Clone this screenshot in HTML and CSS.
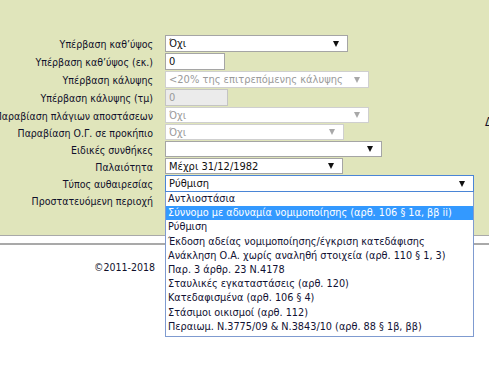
FILE: index.html
```html
<!DOCTYPE html>
<html lang="el">
<head>
<meta charset="utf-8">
<link rel="stylesheet" href="styles.css">
</head>
<body>
<div class="panel">
  <div class="form">
    <div class="row r18"><div class="lbl"><span>Υπέρβαση καθ’ύψος</span></div><div class="ctl"><div class="sel w183"><span class="val">Όχι</span><i class="arr"></i></div></div></div>
    <div class="row r18"><div class="lbl"><span>Υπέρβαση καθ’ύψος (εκ.)</span></div><div class="ctl"><div class="inp w60">0</div></div></div>
    <div class="row r18"><div class="lbl"><span>Υπέρβαση κάλυψης</span></div><div class="ctl"><div class="sel w204 dis"><span class="val">&lt;20% της επιτρεπόμενης κάλυψης</span><i class="arr"></i></div></div></div>
    <div class="row r18"><div class="lbl"><span>Υπέρβαση κάλυψης (τμ)</span></div><div class="ctl"><div class="inp w63 dis">0</div></div></div>
    <div class="row r17"><div class="lbl"><span>Παραβίαση πλάγιων αποστάσεων</span></div><div class="ctl"><div class="sel w204 dis"><span class="val">Όχι</span><i class="arr"></i></div></div></div>
    <div class="row r17"><div class="lbl"><span>Παραβίαση Ο.Γ. σε προκήπιο</span></div><div class="ctl"><div class="sel w179 dis"><span class="val">Όχι</span><i class="arr"></i></div></div></div>
    <div class="row r17"><div class="lbl"><span>Ειδικές συνθήκες</span></div><div class="ctl"><div class="sel w217"><span class="val"></span><i class="arr"></i></div></div></div>
    <div class="row r17"><div class="lbl"><span>Παλαιότητα</span></div><div class="ctl"><div class="sel w178"><span class="val">Μέχρι 31/12/1982</span><i class="arr"></i></div></div></div>
    <div class="row r17"><div class="lbl"><span>Τύπος αυθαιρεσίας</span></div><div class="ctl drop-anchor"><div class="sel w309 focus"><span class="val">Ρύθμιση</span><i class="arr"></i></div>
      <ul class="list">
        <li>Αντλιοστάσια</li>
        <li class="hl">Σύννομο με αδυναμία νομιμοποίησης (αρθ. 106 § 1α, ββ ii)</li>
        <li>Ρύθμιση</li>
        <li>Έκδοση αδείας νομιμοποίησης/έγκριση κατεδάφισης</li>
        <li>Ανάκληση Ο.Α. χωρίς αναληθή στοιχεία (αρθ. 110 § 1, 3)</li>
        <li>Παρ. 3 άρθρ. 23 Ν.4178</li>
        <li>Σταυλικές εγκαταστάσεις (αρθ. 120)</li>
        <li>Κατεδαφισμένα (αρθ. 106 § 4)</li>
        <li>Στάσιμοι οικισμοί (αρθ. 112)</li>
        <li>Περαιωμ. Ν.3775/09 &amp; Ν.3843/10 (αρθ. 88 § 1β, ββ)</li>
      </ul>
    </div></div>
    <div class="row r17"><div class="lbl"><span>Προστατευόμενη περιοχή</span></div><div class="ctl"><div class="sel w217"><span class="val"></span><i class="arr"></i></div></div></div>
  </div>
  <div class="side">Δ</div>
</div>
<div class="footer">
  <div class="copy">©2011-2018</div>
</div>
</body>
</html>
```
FILE: styles.css
```css
html, body {
  margin: 0;
  padding: 0;
  background: #ffffff;
}
body {
  width: 489px;
  height: 365px;
  overflow: hidden;
  font-family: "DejaVu Sans", sans-serif;
  font-stretch: condensed;
  font-size: 10.5px;
  color: #10102a;
}
.panel {
  display: flex;
  background: #e0e5bb;
  padding: 35px 0 26px 0;
  border-bottom: 1px solid #a9a9a9;
  height: 174px;
}
.form {
  width: 485px;
  flex-shrink: 0;
  display: flex;
  flex-direction: column;
}
.side {
  padding-top: 80px;
  white-space: nowrap;
  font-size: 12px;
}
.row {
  display: grid;
  grid-template-columns: 153px 1fr;
  column-gap: 12px;
  align-items: start;
}
.r18 { height: 18px; }
.r17 { height: 17px; }
.lbl {
  display: flex;
  justify-content: flex-end;
  align-items: center;
  height: 17px;
  white-space: nowrap;
}
.ctl {
  display: flex;
}
.drop-anchor {
  position: relative;
}
.sel, .inp {
  box-sizing: border-box;
  height: 17px;
  border: 1px solid #a5a5a5;
  background: #ffffff;
  display: flex;
  align-items: center;
  padding: 0 8px 0 3px;
  white-space: nowrap;
  overflow: hidden;
  color: #111111;
  font-size: 11px;
}
.r17 .sel { height: 16px; }
.inp { padding-right: 2px; }
.val {
  flex: 1;
  overflow: hidden;
}
.arr {
  width: 0;
  height: 0;
  border-left: 3.5px solid transparent;
  border-right: 3.5px solid transparent;
  border-top: 6px solid #111111;
  margin-left: 4px;
}
.dis {
  border-color: #cfcfcf;
  color: #9a9a9a;
}
.dis .arr { border-top-color: #a8a8a8; }
.inp.dis {
  background: #ebebeb;
  border-color: #c4c4c4;
}
.focus {
  border-color: #4a85d6;
  height: 17px !important;
}
.w60 { width: 60px; }
.w63 { width: 63px; }
.w178 { width: 178px; }
.w179 { width: 179px; }
.w183 { width: 183px; }
.w204 { width: 204px; }
.w217 { width: 217px; }
.w309 { width: 309px; }
.list {
  position: absolute;
  left: 0;
  top: 17px;
  width: 309px;
  box-sizing: border-box;
  margin: 0;
  padding: 0 0 2px 0;
  list-style: none;
  background: #ffffff;
  border: 1px solid #7f9bd0;
  border-top: none;
  z-index: 5;
  font-size: 10.8px;
}
.list li {
  height: 14.2px;
  line-height: 14px;
  padding-left: 2px;
  white-space: nowrap;
  color: #111133;
}
.list li.hl {
  background: #3399ff;
  color: #ffffff;
}
.footer {
  margin-top: 7px;
  border-top: 2px solid #a9a9a9;
  padding-top: 16px;
}
.copy {
  width: 155px;
  text-align: right;
}
```
